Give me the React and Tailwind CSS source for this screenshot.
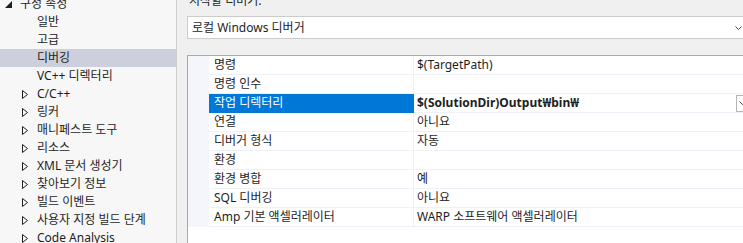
import React from 'react';

const treeItems = [
  { label: '일반', child: true },
  { label: '고급', child: true },
  { label: '디버깅', child: true, selected: true },
  { label: 'VC++ 디렉터리', child: true },
  { label: 'C/C++', group: true },
  { label: '링커', group: true },
  { label: '매니페스트 도구', group: true },
  { label: '리소스', group: true },
  { label: 'XML 문서 생성기', group: true },
  { label: '찾아보기 정보', group: true },
  { label: '빌드 이벤트', group: true },
  { label: '사용자 지정 빌드 단계', group: true },
  { label: 'Code Analysis', group: true },
];

const rows = [
  { name: '명령', value: '$(TargetPath)' },
  { name: '명령 인수', value: '' },
  { name: '작업 디렉터리', value: '$(SolutionDir)Output₩bin₩', selected: true },
  { name: '연결', value: '아니요' },
  { name: '디버거 형식', value: '자동' },
  { name: '환경', value: '' },
  { name: '환경 병합', value: '예' },
  { name: 'SQL 디버깅', value: '아니요' },
  { name: 'Amp 기본 액셀러레이터', value: 'WARP 소프트웨어 액셀러레이터' },
];

const Collapsed = () => (
  <svg width="6" height="9" viewBox="0 0 6 9" className="shrink-0">
    <path d="M0.5 0.5 L5.5 4.5 L0.5 8.5 Z" fill="none" stroke="#1e1e1e" strokeWidth="1" />
  </svg>
);

const Expanded = () => (
  <svg width="7" height="7" viewBox="0 0 7 7" className="shrink-0">
    <path d="M7 0 L7 7 L0 7 Z" fill="#1e1e1e" />
  </svg>
);

const Chevron = () => (
  <svg width="7" height="4" viewBox="0 0 7 4" className="shrink-0">
    <path d="M0.5 0.5 L3.5 3.5 L6.5 0.5" fill="none" stroke="#444" strokeWidth="1" />
  </svg>
);

const App = () => {
  return (
    <div
      className="flex w-[743px] h-[243px] overflow-hidden text-[12px] text-[#1e1e1e] bg-[#f0f0f0]"
      style={{ fontFamily: '"Noto Sans", "Noto Sans CJK KR", sans-serif' }}
    >
      {/* Tree */}
      <div className="w-[177px] shrink-0 bg-[#f7f7f7] border-r border-[#cfcfcf]">
        <div className="-mt-[5px] flex flex-col">
          <div className="h-[18px] flex items-center pl-[5px] gap-[8px]">
            <Expanded />
            <span className="leading-none">구성 속성</span>
          </div>
          {treeItems.map((item) => (
            <div
              key={item.label}
              className={`h-[18px] flex items-center ${item.selected ? 'bg-[#cdd0dc]' : ''}`}
            >
              <div className="w-[37px] shrink-0 flex justify-end pr-[9px]">
                {item.group && <Collapsed />}
              </div>
              <span className="leading-none whitespace-nowrap">{item.label}</span>
            </div>
          ))}
        </div>
      </div>

      {/* Right panel */}
      <div className="flex-1 flex flex-col pl-[10px] min-w-0">
        <div className="-mt-[7px] h-[16px] leading-[16px] pl-[2px] mb-[7px] whitespace-nowrap">시작할 디버거:</div>
        <div className="h-[23px] flex items-center bg-white border border-[#cccccc] border-r-0 pl-[4px] pr-[1px]">
          <span className="flex-1 whitespace-nowrap">로컬 Windows 디버거</span>
          <Chevron />
        </div>
        <div className="mt-[16px] flex-1 bg-white border-t border-l border-[#a9a9a9]">
          {rows.map((row) => (
            <div key={row.name} className="h-[19px] flex">
              <div className="w-[21px] shrink-0 bg-[#f4f6fb]" />
              <div
                className={`w-[205px] shrink-0 flex items-center pl-[5px] border-b border-r ${
                  row.selected ? 'bg-[#0078d7] text-white border-[#0078d7]' : 'border-[#eef1f7]'
                }`}
              >
                <span className="whitespace-nowrap">{row.name}</span>
              </div>
              <div className="flex-1 flex items-center pl-[3px] border-b border-[#eef1f7] min-w-0">
                <span className={`flex-1 whitespace-nowrap ${row.selected ? 'font-bold' : ''}`}>{row.value}</span>
                {row.selected && (
                  <div className="w-[7px] h-[17px] overflow-hidden border border-r-0 border-[#b4b4b4] bg-white flex items-center pl-[2px]">
                    <Chevron />
                  </div>
                )}
              </div>
            </div>
          ))}
        </div>
      </div>
    </div>
  );
};

export default App;
